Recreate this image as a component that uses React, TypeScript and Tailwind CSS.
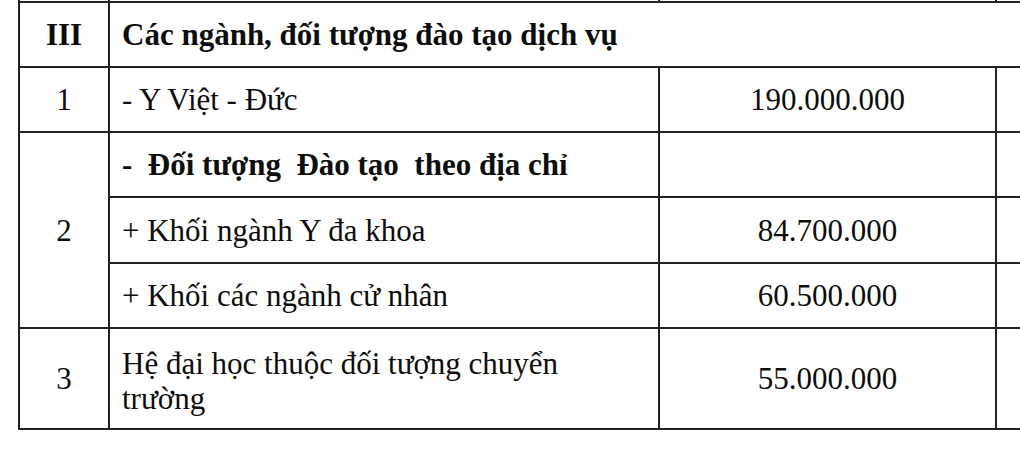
import React from 'react';

const LINE = 'border-2 border-[#222]';

export default function App() {
  return (
    <div className="w-[1020px] h-[461px] overflow-hidden bg-white pl-[18px]">
      <table className="border-collapse table-fixed w-[1120px] font-[family-name:Liberation_Serif,Times_New_Roman,serif] text-[31px] leading-[35px] font-normal text-[#0d0d0d]">
        <colgroup>
          <col className="w-[90px]" />
          <col className="w-[550px]" />
          <col className="w-[337px]" />
          <col />
        </colgroup>
        <tbody>
          {/* tail of the previous row */}
          <tr className="h-[2px]">
            <td className={`${LINE} border-t-0 p-0`}></td>
            <td className={`${LINE} border-t-0 p-0`}></td>
            <td className={`${LINE} border-t-0 p-0`}></td>
            <td className={`${LINE} border-t-0 p-0`}></td>
          </tr>
          <tr className="h-[65px]">
            <td className={`${LINE} text-center font-bold`}>III</td>
            <td colSpan={3} className={`${LINE} px-3 font-bold`}>Các ngành, đối tượng đào tạo dịch vụ</td>
          </tr>
          <tr className="h-[65px]">
            <td className={`${LINE} text-center`}>1</td>
            <td className={`${LINE} px-3`}>- Y Việt - Đức</td>
            <td className={`${LINE} text-center`}>190.000.000</td>
            <td className={LINE}></td>
          </tr>
          <tr className="h-[65px]">
            <td rowSpan={3} className={`${LINE} text-center`}>2</td>
            <td className={`${LINE} px-3 font-bold whitespace-pre`}>-  Đối tượng  Đào tạo  theo địa chỉ</td>
            <td className={LINE}></td>
            <td className={LINE}></td>
          </tr>
          <tr className="h-[66px]">
            <td className={`${LINE} px-3`}>+ Khối ngành Y đa khoa</td>
            <td className={`${LINE} text-center`}>84.700.000</td>
            <td className={LINE}></td>
          </tr>
          <tr className="h-[65px]">
            <td className={`${LINE} px-3`}>+ Khối các ngành cử nhân</td>
            <td className={`${LINE} text-center`}>60.500.000</td>
            <td className={LINE}></td>
          </tr>
          <tr className="h-[101px]">
            <td className={`${LINE} text-center`}>3</td>
            <td className={`${LINE} px-3 pt-1`}>
              Hệ đại học thuộc đối tượng chuyển
              <br />
              trường
            </td>
            <td className={`${LINE} text-center`}>55.000.000</td>
            <td className={LINE}></td>
          </tr>
        </tbody>
      </table>
    </div>
  );
}
